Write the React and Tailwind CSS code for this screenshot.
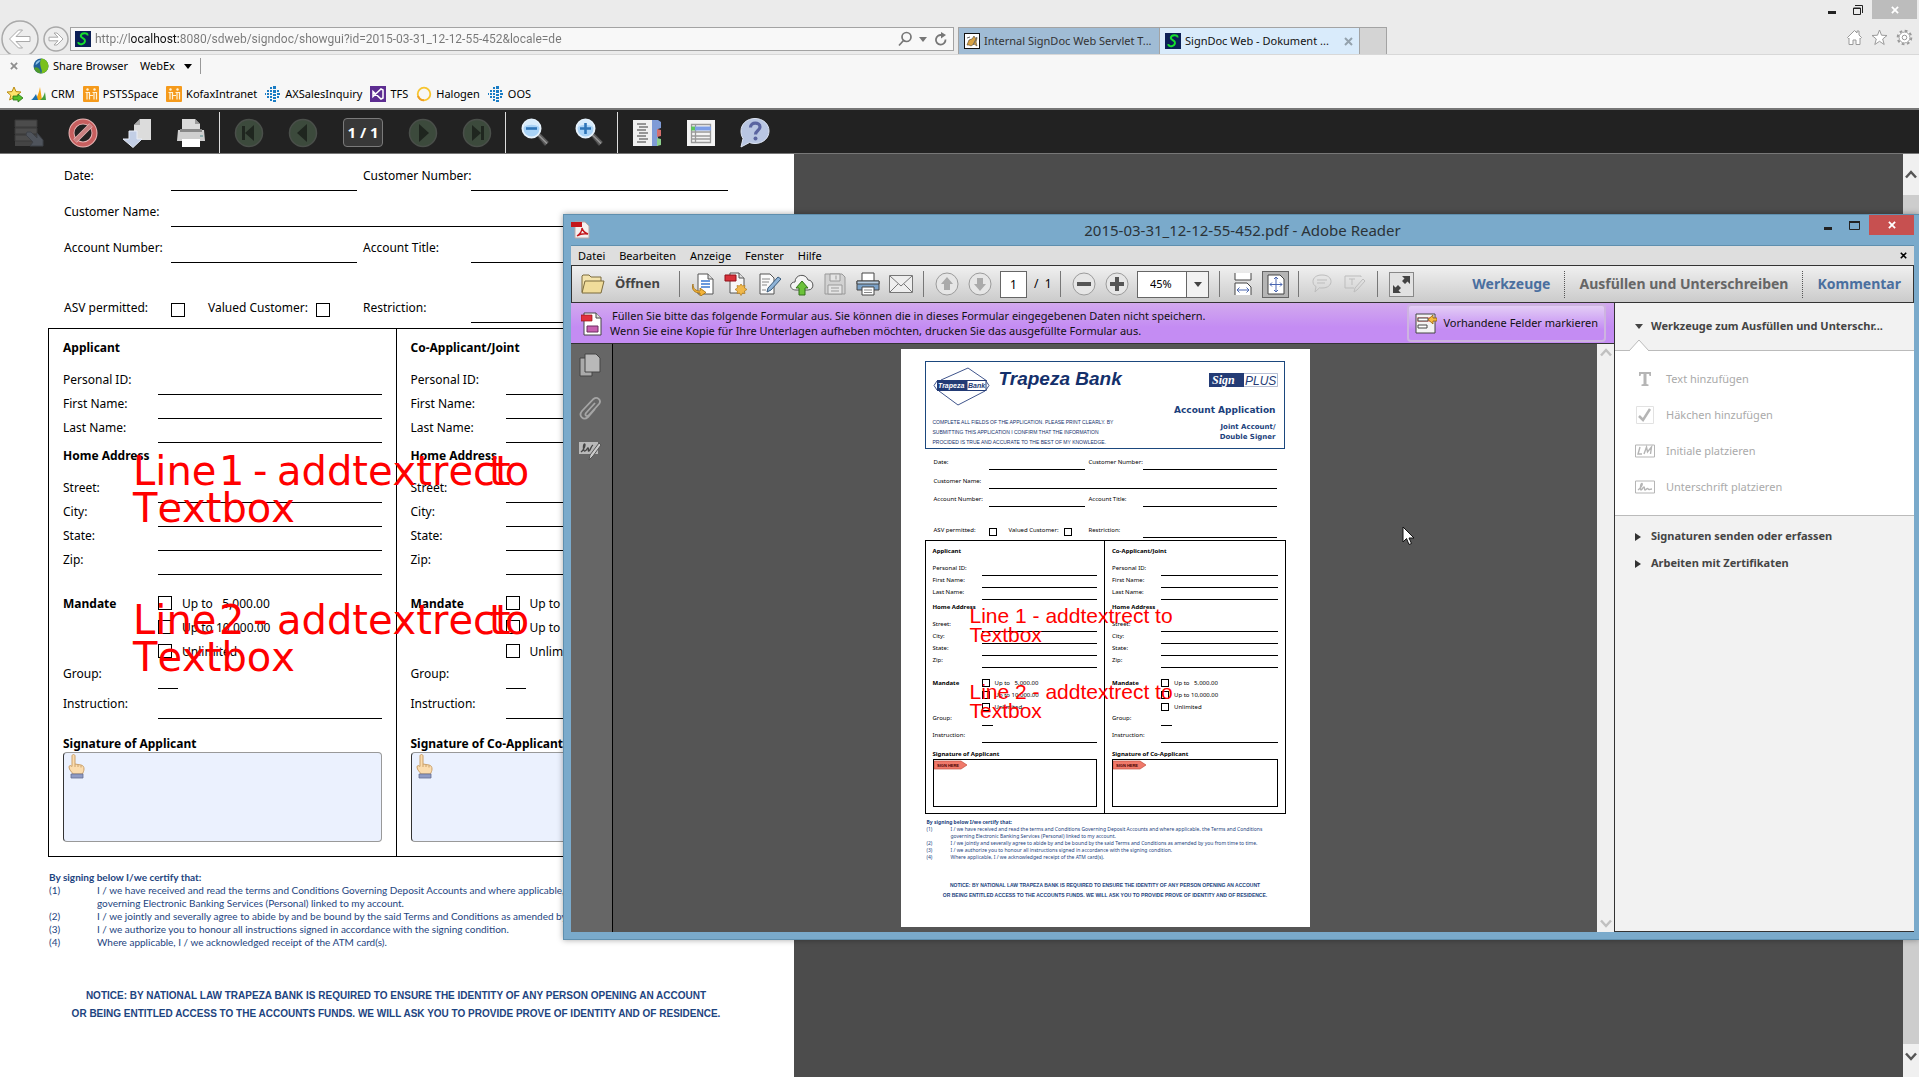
import React from 'react';

const UI = "font-['Noto_Sans','Open_Sans',sans-serif]";

/* ---------- shared icons ---------- */

const SignDocIcon = () => (
  <svg width="16" height="16" viewBox="0 0 16 16" className="shrink-0">
    <rect width="16" height="16" fill="#0c2056" />
    <path d="M12.500 4.500C13 1.200 6 1.500 5.800 5c-.1 2.200 4.600 2.300 4.200 5-.4 3.500-6.400 4.500-6.800 1.200" fill="none" stroke="#16e02c" strokeWidth="2" />
  </svg>
);

const ServletIcon = () => (
  <svg width="16" height="16" viewBox="0 0 16 16" className="shrink-0">
    <rect x=".5" y=".5" width="15" height="15" fill="#fff" stroke="#111" />
    <path d="M3 12l2-5 3-1 2-3 1 2 2 0-1 4 1 4-3-2-3 2-2-1z" fill="#d8a243" stroke="#55452a" strokeWidth=".6" />
    <path d="M3 5l3-1M9 12l4-8" stroke="#666" />
  </svg>
);

const CrossIcon = ({ className, size = 9 }) => (
  <svg width={size} height={size} viewBox="0 0 9 9" className={className}>
    <path d="M1 1l7 7M8 1L1 8" stroke="currentColor" strokeWidth="2" />
  </svg>
);

const OrangeIcon = () => (
  <svg width="16" height="16" viewBox="0 0 16 16" className="shrink-0">
    <rect width="16" height="16" rx="1" fill="#f59a1b" />
    <path d="M2.500 6.500h4v7M9.500 6.500h4v7M4 6v7.500M11 6v7.500M6 9.500h4" fill="none" stroke="#fff3da" strokeWidth="1.200" />
    <circle cx="4.500" cy="3.500" r="1.200" fill="#fff3da" />
    <circle cx="11.500" cy="3.500" r="1.200" fill="#fff3da" />
  </svg>
);

const DotsIcon = () => (
  <svg width="16" height="16" viewBox="0 0 16 16" fill="#1a7cc4" className="shrink-0">
    <path d="M5 1h2v2H5zM8 0h3v3H8zM2 4h2v2H2zM5 4h2v2H5zM8 4h3v3H8zM12 4h2v2h-2zM0 7h1v2H0zM2 7h2v2H2zM5 7h2v2H5zM8 8h3v2H8zM12 7h3v2h-3zM2 10h2v2H2zM5 10h2v2H5zM8 11h3v2H8zM12 10h2v2h-2zM5 13h2v2H5zM8 14h3v2H8z" />
  </svg>
);

const ShareIcon = () => (
  <svg width="16" height="16" viewBox="0 0 16 16" className="shrink-0">
    <circle cx="8" cy="8" r="7.500" fill="#1f5f9c" />
    <path d="M8 .5a7.500 7.500 0 0 1 0 15C11 12 5 9 8 .5z" fill="#7ac01c" />
    <path d="M1 10c3-2 6 0 7 5.500A7.500 7.500 0 0 1 1 10z" fill="#4e9b2a" />
    <path d="M3 4.500C5 2 7 2 7.500 2.500 6 5 4 6 2.500 7z" fill="#8ec3ea" />
  </svg>
);

const StarAddIcon = () => (
  <svg width="17" height="17" viewBox="0 0 17 17" className="shrink-0">
    <path d="M8 1l2 4.600 5 .4-3.800 3.300L12.400 14 8 11.500 3.600 14l1.200-4.700L1 6l5-.4z" fill="#ffe36b" stroke="#b98a12" />
    <path d="M7 10h5V8l5 4-5 4v-2H7z" fill="#56c02b" stroke="#287312" strokeWidth=".8" />
  </svg>
);

const CrmIcon = () => (
  <svg width="16" height="16" viewBox="0 0 16 16" className="shrink-0">
    <path d="M0 14l5-4v4z" fill="#2a8ec4" />
    <path d="M3 14C7 11 8 6 9 1l2 13z" fill="#f3a712" />
    <path d="M9 14c3-2 4-5 5-8l1 8z" fill="#45a03c" />
    <path d="M1 14l4-6 2 6z" fill="#1c6faf" />
  </svg>
);

const TfsIcon = () => (
  <svg width="16" height="16" viewBox="0 0 16 16" className="shrink-0">
    <rect width="16" height="16" fill="#5d2d91" />
    <path d="M3 5.500v5L11 3l2 1v8l-2 1-8-7.500z" fill="none" stroke="#fff" strokeWidth="1.500" />
  </svg>
);

const HalogenIcon = () => (
  <svg width="16" height="16" viewBox="0 0 16 16" className="shrink-0">
    <circle cx="8" cy="8" r="6.300" fill="none" stroke="#f7c52f" strokeWidth="1.800" />
    <path d="M2 10a6.300 6.300 0 0 0 6 4.300" fill="none" stroke="#ee9d25" strokeWidth="2" />
  </svg>
);

const CaretDown = ({ className }) => (
  <svg width="8" height="5" viewBox="0 0 8 5" className={className}>
    <path d="M0 0h8L4 5z" fill="currentColor" />
  </svg>
);

/* ---------- browser ---------- */

const favorites = [
  { label: 'CRM', Icon: CrmIcon },
  { label: 'PSTSSpace', Icon: OrangeIcon },
  { label: 'KofaxIntranet', Icon: OrangeIcon },
  { label: 'AXSalesInquiry', Icon: DotsIcon },
  { label: 'TFS', Icon: TfsIcon },
  { label: 'Halogen', Icon: HalogenIcon },
  { label: 'OOS', Icon: DotsIcon },
];

const BrowserHeader = () => (
  <header className="flex h-[55px] shrink-0 items-end border-b border-[#d8d8d8] bg-[#ebebeb]">
    <div className="flex h-[34px] shrink-0 items-start gap-1 overflow-hidden pl-px">
      <button aria-label="Back">
        <svg width="38" height="38" viewBox="0 0 38 38" fill="none" stroke="#a9a9a9">
          <circle cx="19" cy="19" r="18" fill="#ededed" strokeWidth="1.500" />
          <path d="M8.500 19l9-9h4l-6.500 6.500h14v5H15l6.500 6.500h-4z" fill="#fff" strokeLinejoin="round" />
        </svg>
      </button>
      <button aria-label="Forward" className="pt-[6px]">
        <svg width="26" height="26" viewBox="0 0 26 26" fill="none" stroke="#a9a9a9">
          <circle cx="13" cy="13" r="12" fill="#ededed" strokeWidth="1.500" />
          <path d="M20 13l-6-6h-3l4 4.200H6v3.600h9L11 19h3z" fill="#fff" strokeLinejoin="round" />
        </svg>
      </button>
    </div>
    <div className="mb-[3px] ml-px flex h-[24px] w-[884px] items-center border border-[#a3a3a3] bg-[#f8f8f8] pl-1">
      <SignDocIcon />
      <input
        aria-label="Address"
        defaultValue="http://localhost:8080/sdweb/signdoc/showgui?id=2015-03-31_12-12-55-452&locale=de"
        className="ml-1 min-w-0 flex-1 bg-[linear-gradient(90deg,#777_36px,#111_36px,#111_84px,#777_84px)] bg-clip-text font-['Roboto',sans-serif] text-xs text-transparent outline-none"
      />
      <div className="flex items-center gap-[6px] pr-1 text-[#777]">
        <button aria-label="Search">
          <svg width="16" height="16" viewBox="0 0 16 16" fill="none" stroke="currentColor" strokeWidth="1.700">
            <circle cx="9.500" cy="6" r="4.500" />
            <path d="M6.500 9.500L2 14.500" />
          </svg>
        </button>
        <CaretDown />
        <button aria-label="Refresh">
          <svg width="16" height="16" viewBox="0 0 16 16" fill="none" stroke="currentColor" strokeWidth="1.800">
            <path d="M12.500 8.500A4.800 4.800 0 1 1 9 4.200" />
            <path d="M8 1l5 3-5 3.500z" fill="currentColor" stroke="none" />
          </svg>
        </button>
      </div>
    </div>
    <nav className="ml-1 flex h-[27px] border-t border-l border-[#a3a3a3] text-[11px]">
      <a href="#servlet" className="flex w-[201px] items-center gap-1 overflow-hidden border-r border-[#a3a3a3] bg-[#a0bcd5] pl-[5px] whitespace-nowrap text-[#333]">
        <ServletIcon />
        <span>Internal SignDoc Web Servlet T...</span>
      </a>
      <div className="flex w-[200px] items-center border-r border-[#a3a3a3] bg-[#d9ebfb] pl-[5px] whitespace-nowrap text-[#111]">
        <SignDocIcon />
        <a href="#signdoc" className="ml-1 flex-1">SignDoc Web - Dokument ...</a>
        <button aria-label="Close tab" className="mr-[6px] text-[#94a2ad]"><CrossIcon /></button>
      </div>
      <button aria-label="New tab" className="w-[27px] border-r border-[#a3a3a3] bg-[#d4d4d4]" />
    </nav>
    <div className="ml-auto flex h-full flex-col items-end justify-between">
      <div className="flex items-start pr-[2px] text-[#222]">
        <button aria-label="Minimize" className="px-2 pt-[11px]">
          <svg width="8" height="3"><rect width="8" height="3" fill="#222" /></svg>
        </button>
        <button aria-label="Restore" className="px-[9px] pt-[4px]">
          <svg width="10" height="11" viewBox="0 0 10 11" fill="none" stroke="#222">
            <path d="M2 1.500h7.500V9" />
            <path d="M.5 4h7v6.500h-7z" />
            <path d="M0 4.500h8" />
          </svg>
        </button>
        <button aria-label="Close" className="flex h-[19px] w-[45px] items-center justify-center bg-[#bcbcbc] text-white">
          <CrossIcon size={8} />
        </button>
      </div>
      <div className="flex gap-2 pr-[6px] pb-2">
        <button aria-label="Home">
          <svg width="17" height="17" viewBox="0 0 17 17" fill="#fff" stroke="#9a9a9a">
            <path d="M1.500 8.500l7-7 2.500 2.500V2h2v4l2.500 2.500-1 1-.5-.5v6.500H10V11H7v4.500H3V9l-.5.500z" />
          </svg>
        </button>
        <button aria-label="Favorites">
          <svg width="17" height="17" viewBox="0 0 17 17" fill="#fff" stroke="#9a9a9a">
            <path d="M8.500 1l2 5.200 5.500.3-4.300 3.500 1.500 5.500-4.700-3.200-4.700 3.200 1.500-5.500L1 6.500l5.500-.3z" />
          </svg>
        </button>
        <button aria-label="Settings">
          <svg width="17" height="17" viewBox="0 0 17 17" fill="#fff" stroke="#9a9a9a">
            <circle cx="8.500" cy="8.500" r="6.800" strokeWidth="2" strokeDasharray="2.800 2.540" />
            <circle cx="8.500" cy="8.500" r="5.500" />
            <circle cx="8.500" cy="8.500" r="2.300" />
          </svg>
        </button>
      </div>
    </div>
  </header>
);

const FavoritesBars = () => (
  <div className="h-[53px] shrink-0 bg-[#f7f7f7] text-[11px] leading-4 text-black">
    <div className="flex h-[22px] items-center pl-[10px]">
      <button aria-label="Close toolbar" className="text-[#8e8e8e]"><CrossIcon size={8} /></button>
      <button className="ml-[15px] flex items-center gap-1"><ShareIcon />Share Browser</button>
      <button className="ml-3 flex items-center gap-[9px] border-r border-[#999] pr-2">
        WebEx
        <CaretDown />
      </button>
    </div>
    <nav className="flex h-[34px] items-center gap-2 pl-[6px]">
      <button aria-label="Add favorite"><StarAddIcon /></button>
      {favorites.map(({ label, Icon }) => (
        <a key={label} href="#favorite" className="flex items-center gap-1"><Icon />{label}</a>
      ))}
    </nav>
  </div>
);

/* ---------- SignDoc toolbar ---------- */

const RoundNav = ({ d }) => (
  <svg width="30" height="30" viewBox="0 0 30 30">
    <circle cx="15" cy="15" r="13.500" fill="#3c4a3c" stroke="#4a4f4a" strokeWidth="1.500" />
    <path d={d} fill="#1f261f" />
  </svg>
);

const Magnifier = ({ plus }) => (
  <svg width="30" height="30" viewBox="0 0 30 30">
    <path d="M17 18l3-3 9 9-4 4z" fill="#5c5c5c" stroke="#333" />
    <path d="M19 17.500l8 8" stroke="#999" strokeWidth="1.500" />
    <circle cx="11.500" cy="10.500" r="9" fill="#a9d3f7" stroke="#e6f2fc" strokeWidth="2" />
    <path d="M4 9a7.500 7.500 0 0 1 15 0c-4-3-11-3-15 0z" fill="#d8ecfc" />
    <path d={plus ? 'M6 10.500h11M11.500 5v11' : 'M6 10.500h11'} stroke="#2e75b8" strokeWidth="2.600" />
  </svg>
);

const ToolButton = ({ label, children }) => (
  <button aria-label={label} className="flex w-[54px] items-center justify-center">{children}</button>
);

const Divider = () => <div className="mr-[2px] ml-px h-full w-px bg-[#ddd]" />;

const SignDocToolbar = () => (
  <div className="flex h-[46px] shrink-0 items-stretch border-t-2 border-b border-[#777] bg-[#222] pt-[2px] pl-[2px]">
    <ToolButton label="Save">
      <svg width="30" height="30" viewBox="0 0 30 30">
        <path d="M1 2h22v26H1z" fill="#444" />
        <path d="M1 2h22v7H1zM1 10h22v6H1zM1 17h22v6H1z" fill="#4c4c4c" stroke="#383838" />
        <path d="M13 14l4 0 6 6v-5l6 7v6H16l3-4-7-7z" fill="#4f545c" stroke="#3d4046" />
      </svg>
    </ToolButton>
    <ToolButton label="Cancel">
      <svg width="30" height="30" viewBox="0 0 30 30" fill="none">
        <circle cx="15" cy="15" r="11.500" stroke="#e7b6b6" strokeWidth="6" />
        <circle cx="15" cy="15" r="11.500" stroke="#c75f5f" strokeWidth="4" />
        <path d="M23 7L7 23" stroke="#e7b6b6" strokeWidth="5" />
        <path d="M23 7L7 23" stroke="#c98080" strokeWidth="3.500" />
      </svg>
    </ToolButton>
    <ToolButton label="Download">
      <svg width="30" height="30" viewBox="0 0 30 30">
        <path d="M18 1h11v21H12V7z" fill="#dcdcdc" />
        <path d="M12 7l6-6v6z" fill="#aaa" />
        <path d="M7 13h8v8h5L11 29.500 1 21h6z" fill="#c3cfe6" stroke="#e8edf7" />
      </svg>
    </ToolButton>
    <ToolButton label="Print">
      <svg width="30" height="30" viewBox="0 0 30 30">
        <path d="M6 1h13l5 5v9H6z" fill="#dadada" />
        <path d="M19 1v5h5z" fill="#999" />
        <path d="M2 12h26l1 11H1z" fill="#cfcfcf" />
        <path d="M4 11h22v3H4z" fill="#888" />
        <path d="M6 21h18v8H6z" fill="#fff" />
        <path d="M24 18h3" stroke="#4c8c8c" />
      </svg>
    </ToolButton>
    <Divider />
    <ToolButton label="First page"><RoundNav d="M8 8h3v14H8zM20 7v16l-9-8z" /></ToolButton>
    <ToolButton label="Previous page"><RoundNav d="M19 6v18L9 15z" /></ToolButton>
    <div className="flex w-[66px] items-center justify-center">
      <span className="w-10 rounded-sm border border-[#7a7a7a] bg-[#383838] text-center text-[15px] leading-[27px] font-bold whitespace-nowrap text-white">1 / 1</span>
    </div>
    <ToolButton label="Next page"><RoundNav d="M11 6v18l10-9z" /></ToolButton>
    <ToolButton label="Last page"><RoundNav d="M19 8h3v14h-3zM10 7v16l9-8z" /></ToolButton>
    <Divider />
    <ToolButton label="Zoom out"><Magnifier /></ToolButton>
    <ToolButton label="Zoom in"><Magnifier plus /></ToolButton>
    <Divider />
    <ToolButton label="Index">
      <svg width="30" height="30" viewBox="0 0 30 30">
        <path d="M1 2h20v26H1z" fill="#f0f0f0" />
        <path d="M5 6h9M7 9h9M5 12h9M7 15h9M5 18h9M7 21h9M5 24h9" stroke="#777" strokeWidth="1.500" />
        <path d="M20 2h6l3 2v6l-3 1v17h-6z" fill="#7f9bd6" />
        <path d="M25 11l4 1v6l-4 1z" fill="#d66f6f" />
        <path d="M25 20l4 1v6l-4 1z" fill="#8ccf8c" />
      </svg>
    </ToolButton>
    <ToolButton label="Fields">
      <svg width="30" height="30" viewBox="0 0 30 30">
        <path d="M1 2h28v26H1z" fill="#f4f4f4" />
        <path d="M5.500 6.500h19v18h-19zM5 10h20M5 14h20M5 18h20M5 21h20M9.500 6v19" fill="none" stroke="#999" strokeWidth="1.300" />
        <path d="M9 8.500h16v4H9z" fill="#7d9ee6" />
        <path d="M5 8.500h4v4H5z" fill="#5dc15d" />
      </svg>
    </ToolButton>
    <ToolButton label="Help">
      <svg width="32" height="32" viewBox="0 0 32 32">
        <path d="M16 1.500c8 0 14 5.500 14 12.500s-6 12.500-14 12.500c-2 0-4-.3-5.500-1L2 30l2-8.500C2.500 19 2 17 2 14 2 7 8 1.500 16 1.500z" fill="#b9c6e2" stroke="#dfe6f4" />
        <path d="M11.500 10.500c0-6 9.500-5.500 9.500-.5 0 3.500-4.500 3.500-4.500 7.500" fill="none" stroke="#5a64a0" strokeWidth="3.200" />
        <circle cx="16.500" cy="21.500" r="2" fill="#5a64a0" />
      </svg>
    </ToolButton>
  </div>
);

/* ---------- application form, in full size and as thumbnail ---------- */

const large = {
  text: 'text-xs leading-5',
  label: 'pb-[5px] leading-5',
  top: 'pl-4 pr-[66px]',
  first: 'h-[37px]',
  row: 'h-9',
  rowLast: 'h-9',
  checkRow: 'h-[60px]',
  cells: 'grid-cols-[107px_186px_6px_108px_1fr]',
  nameCells: 'grid-cols-[107px_1fr]',
  checkCells: 'grid-cols-[107px_37px_108px_47px_108px_1fr]',
  check: 'size-[14px]',
  checkPad: 'mb-[6px]',
  side: 'pl-12',
  box: 'mt-[5px] w-[697px]',
  column: 'pl-[14px] pr-[14px] pb-[14px]',
  title: 'pt-[9px]',
  labelWidth: 'w-[95px]',
  rowTitle: 'h-[37px]',
  rowTight: 'h-6',
  home: 'h-[26px]',
  rowHome: 'h-[34px]',
  options: 'pt-[21px] leading-4',
  option: 'h-6 gap-[10px]',
  group: 'h-[21px]',
  groupLine: 'w-5 border-[#777]',
  instruction: 'h-[30px]',
  signTitle: 'h-[33px] leading-[17px]',
  signBox: 'h-[90px] rounded-sm border-[#999] border-l-[#333] bg-[#ebf1fe] pl-1 pt-[1px]',
  certify: "mt-[14px] pl-px font-['Lato',sans-serif] text-[10px] leading-[13px]",
  certifyIndex: 'w-12',
  notice: 'mt-[38px] mr-[2px] text-[10px] leading-[18px]',
};

const small = {
  text: 'text-[6px] leading-[10px]',
  label: 'pb-[3px] leading-[10px]',
  top: 'pl-[9px] pr-[33px]',
  first: 'h-[21px]',
  row: 'h-[19px]',
  rowLast: 'h-[18px]',
  checkRow: 'h-[31px]',
  cells: 'grid-cols-[55px_96px_4px_54px_1fr]',
  nameCells: 'grid-cols-[55px_1fr]',
  checkCells: 'grid-cols-[55px_20px_55px_25px_54px_1fr]',
  check: 'size-2',
  checkPad: 'mb-[2px]',
  side: 'pl-6',
  box: 'mt-[2px] w-[361px]',
  column: 'pl-[7px] pr-[7px] pb-[6px]',
  title: 'pt-[5px]',
  labelWidth: 'w-[49px]',
  rowTitle: 'h-5',
  rowTight: 'h-3',
  home: 'h-[13px]',
  rowHome: 'h-[19px]',
  options: 'pt-[11px] leading-[8px]',
  option: 'h-3 gap-[5px]',
  group: 'h-[11px]',
  groupLine: 'w-[11px] border-black',
  instruction: 'h-[17px]',
  signTitle: 'h-4 leading-[10px]',
  signBox: 'h-12 border-black',
  certify: 'mt-[5px] pl-[2px] text-[5px] leading-[7px]',
  certifyIndex: 'w-6',
  notice: 'mt-[19px] text-[5px] leading-[10px]',
};

const Line = ({ className = '', ...props }) => (
  <input type="text" className={`h-3 min-w-0 border-b border-black bg-transparent outline-none ${className}`} {...props} />
);

const Check = ({ s, className = '', ...props }) => (
  <input type="checkbox" className={`m-0 shrink-0 appearance-none border border-black ${s.check} ${className}`} {...props} />
);

const Field = ({ s, label, height }) => (
  <label className={`flex items-end ${height}`}>
    <span className={`shrink-0 ${s.labelWidth} ${s.label}`}>{label}</span>
    <Line className="flex-1" />
  </label>
);

const HandIcon = () => (
  <svg width="17" height="25" viewBox="0 0 17 25">
    <path d="M4 2c0-2 3-2 3 0v8l6 1c2 .5 3 1.500 3 4 0 2-1 3.500-1.500 5H5c-1-2-4-4-4-7 0-1.500 1.500-2 3-.5z" fill="#fbdcae" stroke="#caa06a" />
    <path d="M7 10v3M10 11v2M13 11.500v2" stroke="#caa06a" />
    <path d="M3 20h12v4H3z" fill="#8f9bc4" stroke="#666f92" strokeWidth=".8" />
  </svg>
);

const SignTag = () => (
  <svg width="34" height="10" viewBox="0 0 34 10">
    <path d="M0 1h27l6 4-6 4H0z" fill="#f0796a" stroke="#c2503f" strokeWidth=".7" />
    <text x="3" y="6.500" fontSize="4" fontWeight="bold" fontFamily="Liberation Sans, sans-serif" fill="#400">SIGN HERE</text>
  </svg>
);

const Applicant = ({ s, title, signTitle, Mark, divided }) => (
  <section className={`border-black ${divided ? 'border-r' : ''} ${s.column}`}>
    <h2 className={`font-bold ${s.title}`}>{title}</h2>
    <Field s={s} label="Personal ID:" height={s.rowTitle} />
    <Field s={s} label="First Name:" height={s.rowTight} />
    <Field s={s} label="Last Name:" height={s.rowTight} />
    <h3 className={`flex items-center font-bold ${s.home}`}>Home Address</h3>
    <Field s={s} label="Street:" height={s.rowHome} />
    <Field s={s} label="City:" height={s.rowTight} />
    <Field s={s} label="State:" height={s.rowTight} />
    <Field s={s} label="Zip:" height={s.rowTight} />
    <div className={`flex ${s.options}`}>
      <h3 className={`font-bold ${s.labelWidth}`}>Mandate</h3>
      <div>
        {['Up to \u00a0\u00a05,000.00', 'Up to 10,000.00', 'Unlimited'].map((text) => (
          <label key={text} className={`flex items-start whitespace-nowrap ${s.option}`}>
            <Check s={s} />
            {text}
          </label>
        ))}
      </div>
    </div>
    <label className={`flex items-end ${s.group}`}>
      <span className={`${s.labelWidth} ${s.label}`}>Group:</span>
      <Line className={s.groupLine} />
    </label>
    <Field s={s} label="Instruction:" height={s.instruction} />
    <h3 className={`flex items-end font-bold whitespace-nowrap ${s.signTitle}`}>{signTitle}</h3>
    <button aria-label={signTitle} className={`flex w-full items-start border ${s.signBox}`}>
      <Mark />
    </button>
  </section>
);

const terms = [
  ['(1)', 'I / we have received and read the terms and Conditions Governing Deposit Accounts and where applicable, the Terms and Conditions', 'governing Electronic Banking Services (Personal) linked to my account.'],
  ['(2)', 'I / we jointly and severally agree to abide by and be bound by the said Terms and Conditions as amended by you from time to time.'],
  ['(3)', 'I / we authorize you to honour all instructions signed in accordance with the signing condition.'],
  ['(4)', 'Where applicable, I / we acknowledged receipt of the ATM card(s).'],
];

const ApplicationForm = ({ s, Mark }) => (
  <form className={`text-black ${s.side} ${s.text}`}>
    <div className={s.top}>
      <div className={`grid items-end ${s.cells} ${s.first}`}>
        <span className={s.label}>Date:</span>
        <Line aria-label="Date" />
        <span />
        <span className={`whitespace-nowrap ${s.label}`}>Customer Number:</span>
        <Line aria-label="Customer Number" />
      </div>
      <label className={`grid items-end ${s.nameCells} ${s.row}`}>
        <span className={s.label}>Customer Name:</span>
        <Line />
      </label>
      <div className={`grid items-end ${s.cells} ${s.rowLast}`}>
        <span className={s.label}>Account Number:</span>
        <Line aria-label="Account Number" />
        <span />
        <span className={s.label}>Account Title:</span>
        <Line aria-label="Account Title" />
      </div>
      <div className={`grid items-end ${s.checkCells} ${s.checkRow}`}>
        <span className={s.label}>ASV permitted:</span>
        <Check s={s} className={s.checkPad} aria-label="ASV permitted" />
        <span className={`whitespace-nowrap ${s.label}`}>Valued Customer:</span>
        <Check s={s} className={s.checkPad} aria-label="Valued Customer" />
        <span className={s.label}>Restriction:</span>
        <Line aria-label="Restriction" />
      </div>
    </div>
    <div className={`grid grid-cols-2 border border-black ${s.box}`}>
      <Applicant s={s} title="Applicant" signTitle="Signature of Applicant" Mark={Mark} divided />
      <Applicant s={s} title="Co-Applicant/Joint" signTitle="Signature of Co-Applicant" Mark={Mark} />
    </div>
    <div className={`whitespace-nowrap text-[#1d4480] ${s.certify}`}>
      <p className="font-bold">By signing below I/we certify that:</p>
      {terms.map(([index, ...lines]) => (
        <div key={index} className="flex">
          <span className={`shrink-0 ${s.certifyIndex}`}>{index}</span>
          <div>{lines.map((line) => <p key={line}>{line}</p>)}</div>
        </div>
      ))}
    </div>
  </form>
);

const Notice = ({ s }) => (
  <div className={`text-center font-['Liberation_Sans',sans-serif] font-bold whitespace-nowrap text-[#1d4480] ${s.notice}`}>
    <p>NOTICE: BY NATIONAL LAW TRAPEZA BANK IS REQUIRED TO ENSURE THE IDENTITY OF ANY PERSON OPENING AN ACCOUNT</p>
    <p>OR BEING ENTITLED ACCESS TO THE ACCOUNTS FUNDS. WE WILL ASK YOU TO PROVIDE PROVE OF IDENTITY AND OF RESIDENCE.</p>
  </div>
);

// Text annotation placed word by word on top of the page
const Annotation = ({ line, className }) => (
  <div className={`pointer-events-none absolute left-[133px] font-['DejaVu_Sans',sans-serif] text-[40px] leading-[37px] whitespace-pre text-[#ff0000] [font-kerning:none] ${className}`}>
    <div className="flex">
      <span className="w-[86px]">Line</span>
      <span className="w-[34px]">{line}</span>
      <span className="w-[24px]">-</span>
      <span className="w-[212px]">addtextrect</span>
      <span>to</span>
    </div>
    <div>Textbox</div>
  </div>
);

const SmallAnnotation = ({ line, className }) => (
  <div className={`pointer-events-none absolute left-[69px] font-['Liberation_Sans',sans-serif] text-[21px] leading-[19px] whitespace-nowrap text-[#ff0000] ${className}`}>
    <p>Line {line} - addtextrect to</p>
    <p>Textbox</p>
  </div>
);

const BankHeader = () => (
  <div className="ml-6 flex h-[88px] w-[360px] justify-between border border-[#1b477d] pt-[5px] pr-[6px] pl-[7px] text-[#14306b]">
    <div>
      <div className="flex items-start gap-[9px]">
        <svg width="57" height="40" viewBox="0 0 57 40">
          <path d="M35 1L54 14M35 1L8 13M6 24l19 14 27-14" fill="none" stroke="#40558c" />
          <path d="M4 14l-3 4.500 3 4.500M53 14l3 4.500-3 4.500" fill="none" stroke="#40558c" />
          <rect x="4" y="13" width="30" height="11" fill="#233b75" />
          <rect x="34" y="13.500" width="19" height="10" fill="#fff" stroke="#233b75" />
          <text x="5" y="21" fontSize="7" fontWeight="bold" fontStyle="italic" fontFamily="Liberation Sans, sans-serif" fill="#fff">Trapeza</text>
          <text x="35" y="21" fontSize="7" fontWeight="bold" fontStyle="italic" fontFamily="Liberation Sans, sans-serif" fill="#233b75">Bank</text>
        </svg>
        <h1 className="font-['Liberation_Sans',sans-serif] text-[19px] leading-6 font-bold whitespace-nowrap italic">Trapeza Bank</h1>
      </div>
      <div className="mt-[10px] font-['Liberation_Sans',sans-serif] text-[5px] leading-[10px] whitespace-nowrap">
        <p>COMPLETE ALL FIELDS OF THE APPLICATION. PLEASE PRINT CLEARLY. BY</p>
        <p>SUBMITTING THIS APPLICATION I CONFIRM THAT THE INFORMATION</p>
        <p>PROCIDED IS TRUE AND ACCURATE TO THE BEST OF MY KNOWLEDGE.</p>
      </div>
    </div>
    <div className="flex flex-col items-end pt-[6px]">
      <svg width="69" height="15" viewBox="0 0 69 15">
        <rect width="35" height="14" fill="#233b75" />
        <path d="M35 .5h33.500v13H35" fill="none" stroke="#8794b5" strokeWidth=".6" />
        <text x="3" y="10.500" fontSize="12" fontWeight="bold" fontStyle="italic" fontFamily="Liberation Serif, serif" fill="#fff">Sign</text>
        <text x="36" y="12" fontSize="12" fontStyle="italic" fontFamily="Liberation Sans, sans-serif" fill="#233b75">PLUS</text>
      </svg>
      <div className="mt-[14px] pr-[2px] text-right font-['DejaVu_Sans',sans-serif] font-bold text-[#1b3f7c]">
        <p className="text-[9px] leading-4">Account Application</p>
        <p className="mt-[4px] text-[7px] leading-[10px]">Joint Account/</p>
        <p className="text-[7px] leading-[10px]">Double Signer</p>
      </div>
    </div>
  </div>
);

/* ---------- Adobe Reader window ---------- */

const Separator = ({ className = '' }) => <div className={`mx-[6px] h-[26px] w-px shrink-0 bg-[#777] ${className}`} />;

const ReaderButton = ({ label, children }) => (
  <button aria-label={label} className="flex w-[33px] shrink-0 items-center justify-center">{children}</button>
);

const RoundButton = ({ label, d, color }) => (
  <ReaderButton label={label}>
    <svg width="24" height="24" viewBox="0 0 24 24">
      <circle cx="12" cy="12" r="11" fill="#e6e6e6" stroke="#9b9b9b" />
      <path d={d} fill={color} />
    </svg>
  </ReaderButton>
);

const ReaderToolbar = () => (
  <div className="flex h-[38px] shrink-0 items-center border border-[#333] bg-linear-to-b from-[#f0f0f0] to-[#cbcbcb] text-xs">
    <button className="flex w-[101px] shrink-0 items-center gap-[10px] pl-[9px] text-[13px] font-bold text-[#444]">
      <svg width="24" height="20" viewBox="0 0 24 20" stroke="#7b6a3c">
        <path d="M1 18V2l1-1h6l2 2h10v4" fill="#f3e3ad" />
        <path d="M1 19l3-12h19l-3 12z" fill="#f0dc9a" />
      </svg>
      Öffnen
    </button>
    <Separator />
    <ReaderButton label="Export">
      <svg width="24" height="24" viewBox="0 0 24 24">
        <path d="M7 2h10l5 5v15H7z" fill="#fff" stroke="#555" />
        <path d="M17 2v5h5" fill="#ddd" stroke="#555" />
        <path d="M10 9h9M10 12h9M10 15h9" stroke="#3b7ad0" strokeWidth="1.500" />
        <path d="M2 12c0 5 3 7 7 7v-3l6 4.500-6 4V21c-5 0-9-3-7-9z" fill="#f4b43a" stroke="#9c6a10" strokeWidth=".8" />
      </svg>
    </ReaderButton>
    <ReaderButton label="Create PDF">
      <svg width="24" height="24" viewBox="0 0 24 24">
        <path d="M6 1h9l5 5v15H6z" fill="#f7f7f7" stroke="#555" />
        <path d="M15 1v5h5" fill="#ddd" stroke="#555" />
        <path d="M1 3h11v6H1z" fill="#d8313a" stroke="#8f1118" />
        <path d="M17 12l1.500 2 2.500-.5-.5 2.500 2.500 1.500-2.500 1.500.5 2.500-2.500-.5-1.500 2.500-1.500-2.500-2.500.5.500-2.500-2.500-1.500 2.500-1.500-.5-2.500 2.500.5z" fill="#f0b84a" stroke="#b07a1c" strokeWidth=".7" />
      </svg>
    </ReaderButton>
    <ReaderButton label="Sign">
      <svg width="24" height="24" viewBox="0 0 24 24">
        <path d="M3 2h10l4 4v16H3z" fill="#fafafa" stroke="#555" />
        <path d="M5 7h8M5 10h7M5 13h5M5 18h4" stroke="#888" />
        <path d="M21 5l3 2-10 11-4 2 1-4z" fill="#8fb4d8" stroke="#3b5a78" />
      </svg>
    </ReaderButton>
    <ReaderButton label="Upload">
      <svg width="26" height="24" viewBox="0 0 26 24">
        <path d="M7 18C0 18 0 10 6 10c0-8 11-9 13-2 6 0 7 10 0 10z" fill="#f4f4f4" stroke="#555" />
        <path d="M13 9l6 7h-3v7h-6v-7H7z" fill="#6cc23a" stroke="#33701a" />
      </svg>
    </ReaderButton>
    <ReaderButton label="Save">
      <svg width="22" height="22" viewBox="0 0 22 22" fill="#d2d2d2" stroke="#999">
        <path d="M1 1h17l3 3v17H1z" />
        <path d="M6 1h10v7H6zM4 12h14v9H4z" fill="#e4e4e4" />
        <path d="M12 2.500v4M7 15h8M7 18h8" />
      </svg>
    </ReaderButton>
    <ReaderButton label="Print">
      <svg width="24" height="24" viewBox="0 0 24 24" stroke="#444">
        <path d="M6 1h12v9H6z" fill="#fff" />
        <path d="M1 9h22v9H1z" fill="#7ba2c9" />
        <path d="M1 9h22v3H1z" fill="#b9cfe4" />
        <path d="M6 15h12v8H6z" fill="#fff" />
        <path d="M8 18h8M8 20.500h8" stroke="#888" />
      </svg>
    </ReaderButton>
    <ReaderButton label="Mail">
      <svg width="24" height="18" viewBox="0 0 24 18" fill="#eee" stroke="#777">
        <path d="M.5.5h23v17H.5z" />
        <path d="M1 1l11 10L23 1M1 17l8-8M23 17l-8-8" />
      </svg>
    </ReaderButton>
    <Separator />
    <RoundButton label="Previous page" color="#aaa" d="M12 5l6 7h-3v6H9v-6H6z" />
    <RoundButton label="Next page" color="#aaa" d="M12 19l6-7h-3V6H9v6H6z" />
    <input aria-label="Page" defaultValue="1" className="ml-1 h-[27px] w-[27px] shrink-0 border border-[#666] bg-white text-center outline-none" />
    <span className="ml-[7px] w-5 shrink-0 whitespace-nowrap">/ &nbsp;1</span>
    <Separator />
    <RoundButton label="Zoom out" color="#555" d="M5 10h14v4H5z" />
    <RoundButton label="Zoom in" color="#555" d="M5 10h5V5h4v5h5v4h-5v5h-4v-5H5z" />
    <div className="relative ml-1 shrink-0">
      <select aria-label="Zoom" className="block h-[27px] w-[72px] appearance-none border border-[#666] bg-white pl-3 text-[11px] outline-none">
        <option>45%</option>
      </select>
      <span className="pointer-events-none absolute inset-y-px right-px flex w-[22px] items-center justify-center border-l border-[#666] bg-[#f2f2f2] text-[#444]">
        <CaretDown />
      </span>
    </div>
    <Separator className="ml-[10px]" />
    <ReaderButton label="Fit width">
      <svg width="18" height="22" viewBox="0 0 18 22" fill="#fff" stroke="#444">
        <path d="M1 0v7h16V0" />
        <path d="M1 22V10h12l4 4v8" />
        <path d="M3 17h12M5.500 14.500L3 17l2.500 2.500M12.500 14.500L15 17l-2.500 2.500" stroke="#4a66b0" />
      </svg>
    </ReaderButton>
    <button aria-label="Fit page" className="mx-[3px] flex size-[27px] shrink-0 items-center justify-center border border-[#666] bg-[#b5b5b5]">
      <svg width="18" height="21" viewBox="0 0 18 21" fill="none" stroke="#444">
        <path d="M1 1h12l4 4v15H1z" fill="#fff" />
        <path d="M9 3v15M3 10.500h12M7 5l2-2 2 2M7 16l2 2 2-2M5 8.500l-2 2 2 2M13 8.500l2 2-2 2" stroke="#4a66b0" />
      </svg>
    </button>
    <Separator />
    <ReaderButton label="Comment">
      <svg width="22" height="20" viewBox="0 0 22 20" fill="none" stroke="#bdbdbd">
        <path d="M11 1c6 0 9 3 9 6.500S17 14 11 14c-1 0-2 0-2.500-.2L4 18l1-5.500C3 11.500 2 10 2 7.500 2 4 5 1 11 1z" />
        <path d="M6 6h10M6 9h8" />
      </svg>
    </ReaderButton>
    <ReaderButton label="Highlight">
      <svg width="22" height="20" viewBox="0 0 22 20" fill="none" stroke="#bdbdbd">
        <path d="M17 3V2H1v12h9M5 5h6M8 5v6" />
        <path d="M19 5l2 2-8 9-3 2 1-4z" />
      </svg>
    </ReaderButton>
    <Separator />
    <button aria-label="Reading mode" className="ml-[5px] flex size-[25px] shrink-0 items-center justify-center border border-[#888] bg-[#e2e2e2]">
      <svg width="19" height="19" viewBox="0 0 19 19" fill="#444">
        <path d="M10 1h8v8l-2.500-2.500L13 9l-3-3 2.500-2.500zM9 18H1v-8l2.500 2.500L6 10l3 3-2.500 2.500z" />
      </svg>
    </button>
    <div className="ml-auto flex h-[27px] shrink-0 items-center text-sm font-bold text-[#4a6f9f]">
      <button className="px-[14px]">Werkzeuge</button>
      <button className="h-full border-x border-dotted border-[#555] px-[14px] text-[#666]">Ausfüllen und Unterschreiben</button>
      <button className="pr-3 pl-[14px]">Kommentar</button>
    </div>
  </div>
);

const FormMessage = () => (
  <div className="flex h-[41px] items-center border-b border-[#333] bg-linear-to-b from-[#d2a9ee] to-[#c48cf3] to-60% pr-2 pl-[10px] text-[11px] text-[#111]">
    <svg width="21" height="25" viewBox="0 0 21 25" className="shrink-0">
      <path d="M3 2h12l5 5v17H3z" fill="#fff" stroke="#444" />
      <path d="M15 2v5h5" fill="#ddd" stroke="#444" />
      <path d="M0 4h11v6H0z" fill="#e0313d" stroke="#96121b" strokeWidth=".7" />
      <path d="M6 15h11v6H6z" fill="#c760b0" stroke="#6d2b60" />
    </svg>
    <div className="ml-[8px] leading-[15px] whitespace-nowrap">
      <p className="pl-[2px]">Füllen Sie bitte das folgende Formular aus. Sie können die in dieses Formular eingegebenen Daten nicht speichern.</p>
      <p>Wenn Sie eine Kopie für Ihre Unterlagen aufheben möchten, drucken Sie das ausgefüllte Formular aus.</p>
    </div>
    <button className="ml-auto flex h-[38px] items-center gap-[6px] rounded border-2 border-[#cdb4e0] bg-linear-to-b from-[#e3cdf5] to-[#c48cf3] to-70% px-[6px] whitespace-nowrap">
      <svg width="22" height="21" viewBox="0 0 22 21" fill="none" stroke="#444">
        <path d="M1 1h19v19H1z" fill="#f3f3f3" />
        <path d="M2 4h17v5H2z" fill="#f4a9a9" stroke="none" />
        <path d="M3 5h10v3H3zM3 12h9v3H3z" fill="#fff" />
        <path d="M22 5h-4V2l-5 4.500L18 11V8h4z" fill="#f5b93e" stroke="#90600f" strokeWidth=".8" />
      </svg>
      Vorhandene Felder markieren
    </button>
  </div>
);

const Chevron = ({ up, className }) => (
  <svg width="12" height="9" viewBox="0 0 12 9" className={className}>
    <path d={up ? 'M1 7.500L6 2l5 5.500' : 'M1 1.500L6 7l5-5.500'} fill="none" stroke="currentColor" strokeWidth="2.500" />
  </svg>
);

const tools = [
  {
    label: 'Text hinzufügen',
    icon: <path d="M4 3h12v4h-1.500l-.5-2h-2.500v10l2 .5V17h-7v-1.500l2-.5V5H6l-.5 2H4z" fill="#b5b5b5" />,
  },
  {
    label: 'Häkchen hinzufügen',
    icon: (
      <g fill="none">
        <path d="M1.500 1.500h17v17h-17z" stroke="#e2e2e2" />
        <path d="M4 11l4 4 7-11" stroke="#b5b5b5" strokeWidth="2.500" />
      </g>
    ),
  },
  {
    label: 'Initiale platzieren',
    icon: (
      <g fill="none" stroke="#b5b5b5">
        <path d="M.5 4h19v12H.5z" />
        <path d="M5 6l-2 7h4M9 13l2.500-7 1 5 4-5-1 7" strokeWidth="1.400" />
      </g>
    ),
  },
  {
    label: 'Unterschrift platzieren',
    icon: (
      <g fill="none" stroke="#b5b5b5">
        <path d="M.5 4h19v12H.5z" />
        <path d="M3 13c3-2 5-6 4-6.500C5.500 6 5 13 6 13s2-3 3-3 0 3 1 3 1.500-1.500 2.500-1.500.5 1 1.500 1 1-.5 3-.5" strokeWidth="1.400" />
      </g>
    ),
  },
];

const ToolsPane = () => (
  <aside className="flex w-[300px] shrink-0 flex-col border-b border-l border-[#333] bg-[#f2f2f2] text-[11px] font-bold text-[#444]">
    <button className="flex h-[47px] shrink-0 items-center gap-2 pl-5 text-left whitespace-nowrap">
      <CaretDown />
      Werkzeuge zum Ausfüllen und Unterschr...
    </button>
    <div className="relative border-y border-[#bbb] bg-white pt-[10px] pb-[10px] font-normal text-[#aaa]">
      <svg width="22" height="13" viewBox="0 0 22 13" className="absolute -top-3 left-[13px]">
        <path d="M1 12L11 1l10 11" fill="#fff" stroke="#bbb" />
        <path d="M1 12.500h20" stroke="#fff" />
      </svg>
      {tools.map(({ label, icon }) => (
        <button key={label} disabled className="flex h-9 w-full items-center gap-[11px] pl-5">
          <svg width="20" height="20" viewBox="0 0 20 20">{icon}</svg>
          {label}
        </button>
      ))}
    </div>
    <div className="pt-[7px]">
      {['Signaturen senden oder erfassen', 'Arbeiten mit Zertifikaten'].map((label) => (
        <button key={label} className="flex h-[27px] items-center gap-[10px] pl-5">
          <svg width="6" height="8" viewBox="0 0 6 8"><path d="M0 0l6 4-6 4z" fill="#333" /></svg>
          {label}
        </button>
      ))}
    </div>
  </aside>
);

const ReaderWindow = () => (
  <div className="absolute top-[214px] right-0 left-[563px] flex h-[726px] flex-col border-y border-l border-[#5f8fae] bg-[#7aaacb] pr-[5px] pb-[7px] pl-[7px] shadow-[0_0_6px_rgba(0,0,0,0.35)]">
    <div className="grid h-[30px] shrink-0 grid-cols-[1fr_auto_1fr] items-center">
      <svg width="19" height="18" viewBox="0 0 19 18">
        <path d="M4 1h10l4 4v12H4z" fill="#f4f0f0" stroke="#b9a8a8" />
        <path d="M0 1h11v5H0z" fill="#c3161c" />
        <path d="M6 15c3-2 5-5 5-8 1 4 3 5 6 6-4-.5-8 0-11 2z" fill="none" stroke="#c3161c" strokeWidth="1.400" />
      </svg>
      <h1 className="text-[15px] leading-5 whitespace-nowrap text-[#2b3338]">2015-03-31_12-12-55-452.pdf - Adobe Reader</h1>
      <div className="flex items-start self-start justify-self-end">
        <button aria-label="Minimize" className="px-2 pt-3">
          <svg width="8" height="3"><rect width="8" height="3" fill="#222" /></svg>
        </button>
        <button aria-label="Maximize" className="px-[9px] pt-[6px]">
          <svg width="11" height="9" viewBox="0 0 11 9" fill="none" stroke="#222">
            <path d="M.5 1h10v7.500H.5z" />
            <path d="M0 1h11" strokeWidth="2" />
          </svg>
        </button>
        <button aria-label="Close" className="flex h-5 w-[45px] items-center justify-center bg-[#c75050] text-white">
          <CrossIcon size={8} />
        </button>
      </div>
    </div>
    <nav className="flex h-5 shrink-0 items-center gap-[14px] border-t border-[#5f8fae] bg-[#dedede] pl-[7px] text-[11px] leading-4 text-black">
      <button>Datei</button>
      <button>Bearbeiten</button>
      <button>Anzeige</button>
      <button>Fenster</button>
      <button>Hilfe</button>
      <button aria-label="Close document" className="mr-[7px] ml-auto"><CrossIcon size={7} /></button>
    </nav>
    <ReaderToolbar />
    <div className="flex min-h-0 flex-1">
      <div className="flex min-w-0 flex-1 flex-col">
        <FormMessage />
        <div className="flex min-h-0 flex-1">
          <div className="flex w-[42px] flex-col items-center gap-[18px] border-r border-black bg-[#666] pt-[9px] pr-1">
            <button aria-label="Pages">
              <svg width="22" height="25" viewBox="0 0 22 25" fill="#aaa" stroke="#444">
                <path d="M1 5h12v18H1z" />
                <path d="M6 1h11l4 4v14H6z" fill="#b9b9b9" />
              </svg>
            </button>
            <button aria-label="Attachments">
              <svg width="22" height="25" viewBox="0 0 22 25" fill="none" stroke="#a5a5a5" strokeWidth="1.800">
                <path d="M16 7L7 17c-1.500 2 .5 4 2.500 2.500L20 8c3-4-2-8-5.500-5L3 15c-4 5 1.500 10 6 6l7-8" />
              </svg>
            </button>
            <button aria-label="Signatures">
              <svg width="24" height="22" viewBox="0 0 24 22">
                <path d="M1 3h19v12H1z" fill="#b9b9b9" />
                <path d="M3 13c3-2 5-8 3.500-8S5 13 7 12s2-3 3-3-.5 4 1 3 2-5 4-6" fill="none" stroke="#444" strokeWidth="1.300" />
                <path d="M21 4l2 2-8 11-4 4 1-5z" fill="#ccc" stroke="#555" />
              </svg>
            </button>
          </div>
          <div className="flex min-w-0 flex-1 justify-center overflow-hidden bg-[#555] pt-[5px] pb-[5px]">
            <div className="relative w-[409px] shrink-0 overflow-hidden bg-white pt-3">
              <BankHeader />
              <ApplicationForm s={small} Mark={SignTag} />
              <Notice s={small} />
              <SmallAnnotation line="1" className="top-[257px]" />
              <SmallAnnotation line="2" className="top-[333px]" />
            </div>
          </div>
          <div className="flex w-[17px] flex-col items-center justify-between bg-[#f0f0f0] py-1 text-[#c0c0c0]">
            <Chevron up />
            <Chevron />
          </div>
        </div>
      </div>
      <ToolsPane />
    </div>
  </div>
);

export default function App() {
  return (
    <div className={`relative flex h-screen flex-col overflow-hidden ${UI}`}>
      <BrowserHeader />
      <FavoritesBars />
      <SignDocToolbar />
      <main className="flex min-h-0 flex-1 bg-[#4c4c4c]">
        <div className="relative w-[794px] shrink-0 overflow-hidden bg-white">
          <ApplicationForm s={large} Mark={HandIcon} />
          <Notice s={large} />
          <Annotation line="1" className="top-[299px]" />
          <Annotation line="2" className="top-[448px]" />
        </div>
        <div className="ml-auto flex w-4 flex-col items-center bg-[#f0f0f0] pt-4 text-[#555]">
          <Chevron up />
          <div className="mt-4 w-full flex-1 bg-[#cdcdcd]" />
          <Chevron className="mt-2 mb-4" />
        </div>
      </main>
      <ReaderWindow />
      <svg width="13" height="20" viewBox="0 0 13 20" className="pointer-events-none absolute top-[526px] left-[1402px]">
        <path d="M1 1v15l3.500-3.500L7 18.500l2.500-1L7 12h5z" fill="#fff" stroke="#111" />
      </svg>
    </div>
  );
}
